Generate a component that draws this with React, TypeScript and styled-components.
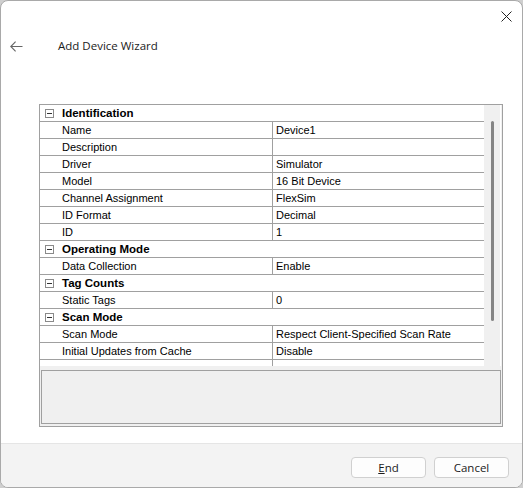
import React from 'react'
import styled, { createGlobalStyle } from 'styled-components'

const GlobalStyle = createGlobalStyle`
  html, body {
    margin: 0;
    padding: 0;
    background: #cfcfcf;
  }
  * {
    box-sizing: border-box;
  }
`

const Window = styled.div`
  width: 523px;
  height: 488px;
  display: flex;
  flex-direction: column;
  background: #ffffff;
  border: 1px solid #a9a9a9;
  border-radius: 8px;
  overflow: hidden;
  font-family: 'Segoe UI', 'Open Sans', sans-serif;
  color: #1a1a1a;
`

const TitleBar = styled.div`
  height: 30px;
  display: flex;
  justify-content: flex-end;
  align-items: center;
  padding-right: 9px;
`

const CloseButton = styled.div`
  width: 14px;
  height: 14px;
  display: flex;
  align-items: center;
  justify-content: center;
`

const Header = styled.div`
  height: 30px;
  display: flex;
  align-items: center;
  padding-left: 8px;
`

const BackArrow = styled.div`
  width: 14px;
  height: 14px;
  display: flex;
  align-items: center;
  justify-content: center;
  margin-right: 35px;
`

const Title = styled.div`
  font-size: 11.5px;
  color: #1b1b1b;
  margin-top: -1px;
`

const Body = styled.div`
  flex: 1;
  padding: 43px 0 0 38px;
`

const PropertyGrid = styled.div`
  width: 464px;
  border: 1px solid #a0a0a0;
  background: #f0f0f0;
  padding: 0 1px 2px 0;
  display: flex;
  flex-direction: column;
  gap: 4px;
`

const GridView = styled.div`
  height: 261px;
  display: flex;
  background: #ffffff;
  overflow: hidden;
`

const Rows = styled.div`
  width: 444px;
  display: flex;
  flex-direction: column;
  font-family: 'Liberation Sans', Arial, sans-serif;
  font-size: 11px;
  color: #000;
`

const Row = styled.div`
  height: 17px;
  flex: none;
  display: grid;
  grid-template-columns: 17px 215px 1fr;
  border-bottom: 1px solid #a0a0a0;
  background: #ffffff;
`

const Margin = styled.div`
  display: flex;
  align-items: center;
  justify-content: center;
  padding-left: 2px;
`

const CategoryLabel = styled.div`
  grid-column: 2 / 4;
  font-weight: bold;
  font-size: 11.5px;
  padding-left: 5px;
  line-height: 17px;
`

const Cell = styled.div<{ $value?: boolean }>`
  line-height: 17px;
  padding-left: ${(p) => (p.$value ? '3px' : '5px')};
  white-space: nowrap;
  overflow: hidden;
  border-left: ${(p) => (p.$value ? '1px solid #a0a0a0' : 'none')};
`

const MinusBox = styled.div`
  width: 9px;
  height: 9px;
  border: 1px solid #8a8a8a;
  background: #fff;
  position: relative;

  &::after {
    content: '';
    position: absolute;
    left: 1px;
    right: 1px;
    top: 3px;
    height: 1px;
    background: #333;
  }
`

const ScrollTrack = styled.div`
  width: 16px;
  background: #f0f0f0;
  display: flex;
  justify-content: center;
  padding-top: 16px;
`

const ScrollThumb = styled.div`
  width: 3px;
  height: 200px;
  border-radius: 2px;
  background: #858585;
`

const HelpPane = styled.div`
  height: 54px;
  margin-left: 1px;
  border: 1px solid #a0a0a0;
  background: #f0f0f0;
`

const Footer = styled.div`
  height: 44px;
  background: #f3f3f3;
  border-top: 1px solid #e5e5e5;
  display: flex;
  justify-content: flex-end;
  align-items: flex-start;
  gap: 8px;
  padding: 13px 13px 0 0;
`

const Button = styled.button`
  width: 75px;
  height: 21px;
  background: #fdfdfd;
  border: 1px solid #d0d0d0;
  border-radius: 4px;
  font-family: 'Segoe UI', 'Open Sans', sans-serif;
  font-size: 11.5px;
  color: #1b1b1b;
  padding: 0;
  line-height: 18px;

  u {
    text-decoration: underline;
  }
`

type Prop = { name: string; value: string }
type Category = { title: string; props: Prop[] }

const categories: Category[] = [
  {
    title: 'Identification',
    props: [
      { name: 'Name', value: 'Device1' },
      { name: 'Description', value: '' },
      { name: 'Driver', value: 'Simulator' },
      { name: 'Model', value: '16 Bit Device' },
      { name: 'Channel Assignment', value: 'FlexSim' },
      { name: 'ID Format', value: 'Decimal' },
      { name: 'ID', value: '1' },
    ],
  },
  { title: 'Operating Mode', props: [{ name: 'Data Collection', value: 'Enable' }] },
  { title: 'Tag Counts', props: [{ name: 'Static Tags', value: '0' }] },
  {
    title: 'Scan Mode',
    props: [
      { name: 'Scan Mode', value: 'Respect Client-Specified Scan Rate' },
      { name: 'Initial Updates from Cache', value: 'Disable' },
      { name: '', value: '' },
    ],
  },
]

const App = () => {
  return (
    <>
      <GlobalStyle />
      <Window>
        <TitleBar>
          <CloseButton>
            <svg width="11" height="11" viewBox="0 0 11 11">
              <path d="M0.5 0.5 L10.5 10.5 M10.5 0.5 L0.5 10.5" stroke="#222" strokeWidth="1" fill="none" />
            </svg>
          </CloseButton>
        </TitleBar>
        <Header>
          <BackArrow>
            <svg width="13" height="11" viewBox="0 0 13 11">
              <path d="M0.8 5.5 H12.5 M5.6 0.7 L0.8 5.5 L5.6 10.3" stroke="#666" strokeWidth="1.1" fill="none" />
            </svg>
          </BackArrow>
          <Title>Add Device Wizard</Title>
        </Header>
        <Body>
          <PropertyGrid>
            <GridView>
              <Rows>
                {categories.map((cat) => (
                  <React.Fragment key={cat.title}>
                    <Row>
                      <Margin>
                        <MinusBox />
                      </Margin>
                      <CategoryLabel>{cat.title}</CategoryLabel>
                    </Row>
                    {cat.props.map((p, i) => (
                      <Row key={cat.title + i}>
                        <Margin />
                        <Cell>{p.name}</Cell>
                        <Cell $value>{p.value}</Cell>
                      </Row>
                    ))}
                  </React.Fragment>
                ))}
              </Rows>
              <ScrollTrack>
                <ScrollThumb />
              </ScrollTrack>
            </GridView>
            <HelpPane />
          </PropertyGrid>
        </Body>
        <Footer>
          <Button>
            <u>E</u>nd
          </Button>
          <Button>Cancel</Button>
        </Footer>
      </Window>
    </>
  )
}

export default App
